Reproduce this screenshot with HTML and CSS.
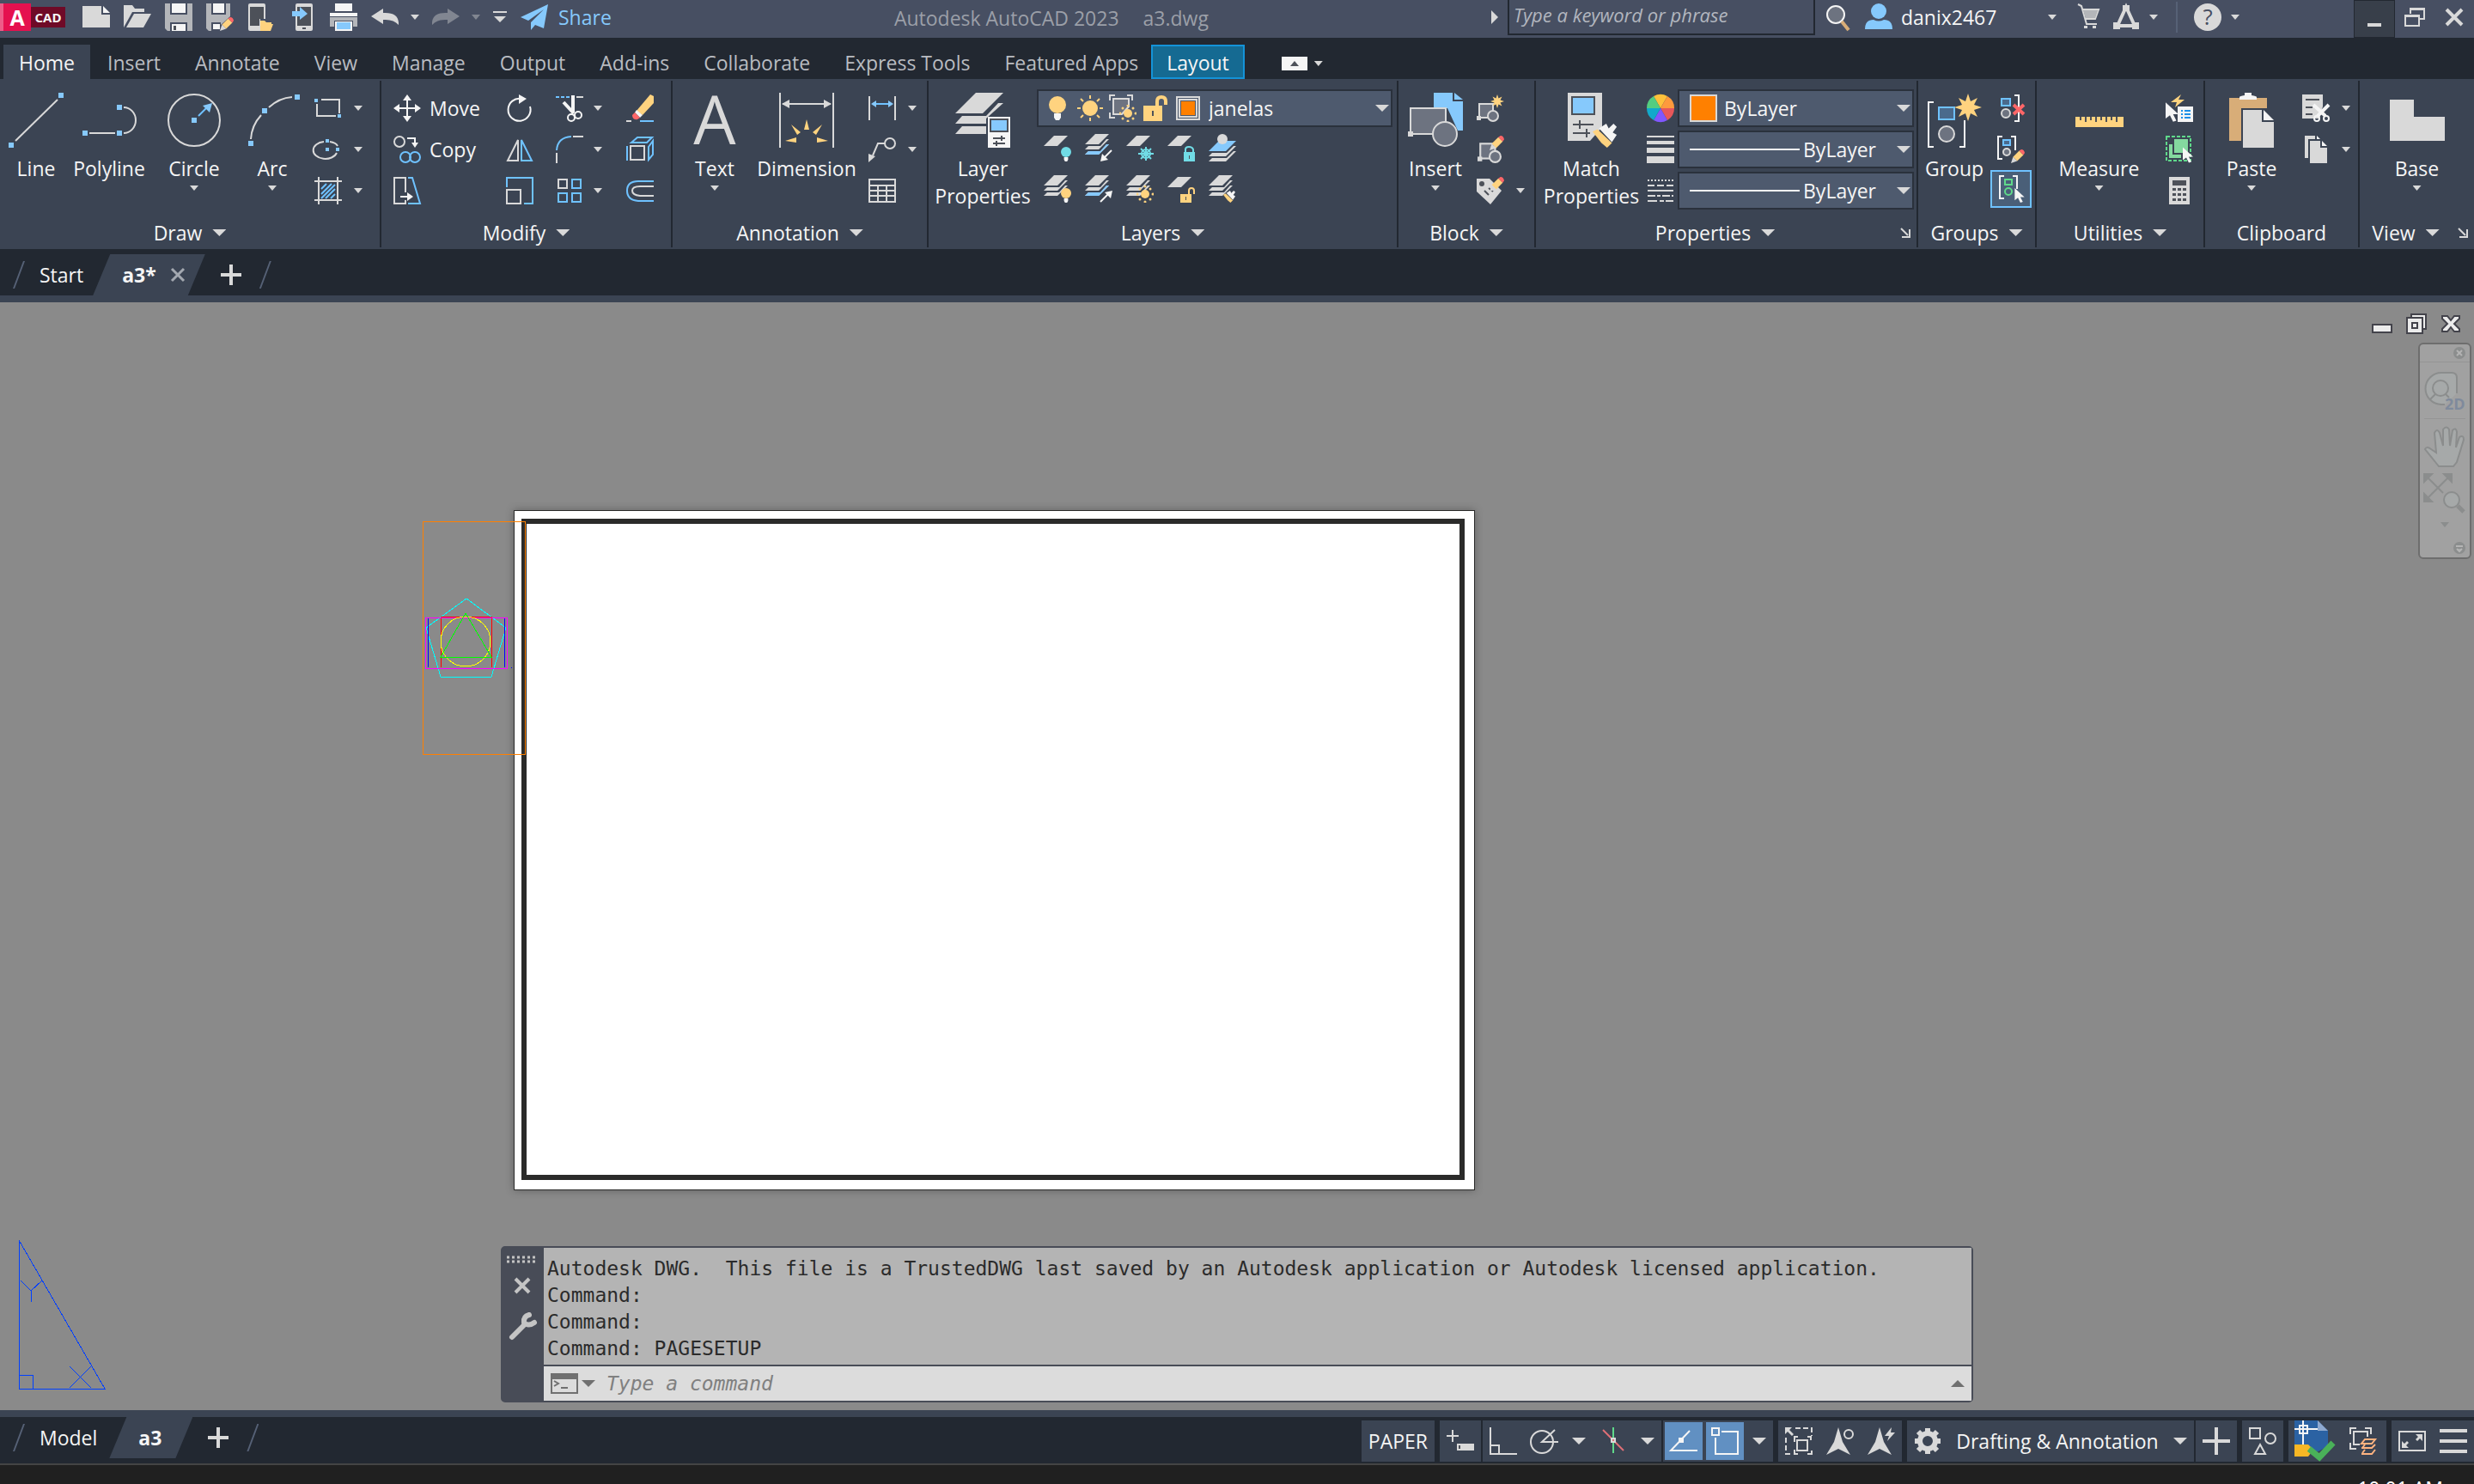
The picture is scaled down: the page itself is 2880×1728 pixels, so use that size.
FILE: index.html
```html
<!DOCTYPE html>
<html lang="en">

<head>
  <meta charset="utf-8">
  <title>Autodesk AutoCAD 2023 - a3.dwg</title>
  <link rel="stylesheet" href="styles.css">
</head>

<body>
  <!-- Shared icon parts -->
  <svg class="sprite" aria-hidden="true">
    <symbol id="plane" viewBox="0 0 28 12"><path class="fw" d="M0 12L12 0H28L16 12z"/></symbol>
    <symbol id="stack" viewBox="0 0 28 24">
      <path class="fw" d="M0 12L12 0H28L16 12zM0 18L4 14H18L25 6H28L16 18zM0 24L4 20H18L25 12H28L16 24z"/>
    </symbol>
    <symbol id="bulb" viewBox="0 0 20 28">
      <circle class="fc" cx="10" cy="10" r="10"/><path class="fl" d="M6 20h8v5l-2 3h-4l-2-3z"/>
    </symbol>
    <symbol id="sundots" viewBox="0 0 20 20">
      <circle class="fy" cx="10" cy="10" r="5"/>
      <path class="sy dots" d="M10 1v.1M10 19v.1M1 10v.1M19 10v.1M4 4v.1M16 4v.1M4 16v.1M16 16v.1"/>
    </symbol>
    <symbol id="pencil" viewBox="0 0 20 20">
      <path class="fy" d="M3 11L12 2L18 8L9 17z"/><path class="fw" d="M3 11L9 17L0 20z"/><path class="fr" d="M12 2L15 0Q19 0 20 5L18 8z"/>
    </symbol>
    <symbol id="cursor" viewBox="0 0 12 18"><path class="fl" d="M0 0L12 11L7 11L10 17L7 18L4 12L0 15z"/></symbol>
    <symbol id="star" viewBox="0 0 32 32">
      <path class="fy" d="M16 0L19 9L27 5L23 13L32 16L23 19L27 27L19 23L16 32L13 23L5 27L9 19L0 16L9 13L5 5L13 9z"/>
    </symbol>
    <symbol id="brush" viewBox="0 0 32 32">
      <path class="fl" d="M9 8L18 2L21 8L27 2L31 6L26 13L31 16L25 25z"/><path class="fy" d="M7 9L25 26L19 32L12 26L1 12z"/>
    </symbol>
    <symbol id="blk" viewBox="0 0 26 24">
      <rect class="sg" x="3" y="3" width="16" height="16"/><rect class="fw" x="0" y="17" width="5" height="5"/><circle class="sg" cx="19" cy="17" r="6"/>
    </symbol>
  </svg>

  <header class="titlebar">
    <div class="quick">
      <div class="logo"><b>A</b><span>CAD</span></div>
      <button title="New"><svg class="i32" viewBox="0 0 32 32"><path class="fw" d="M0 3H22V13H32V28H0z"/><path class="fl" d="M24 3L32 11H24z"/></svg></button>
      <button title="Open"><svg class="i32" viewBox="0 0 32 32"><path class="fw" d="M0 28V2H10L13 6H24V10H10L0 28zM3 28L12 12H32L23 28z"/></svg></button>
      <button title="Save"><svg class="i32" viewBox="0 0 32 32"><path class="fm" d="M0 0H6V13H26V0H32V32H26V22H6V32H3L0 29z"/><path class="fl" d="M8 0H24V11H8zM8 24H24V32H8z"/><path class="fk" d="M10 26h3v5h-3z"/></svg></button>
      <button title="Save As"><svg class="i32" viewBox="0 0 32 32"><path class="fm" d="M0 0H6V13H23V0H28V15L17 25V22H6V32H3L0 29z"/><path class="fl" d="M8 0H21V11H8zM8 24H16V30H8z"/><use href="#pencil" x="16" y="16" width="16" height="16"/></svg></button>
      <button title="Open from Web and Mobile"><svg class="i32" viewBox="0 0 32 32"><path class="fw" d="M1 2Q1 0 3 0H19Q21 0 21 2V18H15V32H3Q1 32 1 30z"/><path class="fk" d="M3 4H19V18H14V26H3z"/><path class="fy" d="M15 32V20H20L22 22H28V24H30L27 32z"/></svg></button>
      <button title="Save to Web and Mobile"><svg class="i32" viewBox="0 0 32 32"><path class="fw" d="M8 2Q8 0 10 0H26Q28 0 28 2V30Q28 32 26 32H10Q8 32 8 30z"/><path class="fk" d="M10 4H26V26H10zM16 28h4v2h-4z"/><path class="fb" d="M4 9H13V4L22 12L13 19V15H4z"/></svg></button>
      <button title="Plot"><svg class="i32" viewBox="0 0 32 32"><path class="fl" d="M6 0H26V9H6zM0 11H32V15H0z"/><path class="fm" d="M0 16H32V27H27V20H5V27H0z"/><path class="fl" d="M6 21H26V32H6z"/><path class="fb" d="M8 22H24V30H8z"/></svg></button>
      <button title="Undo"><svg class="i32" viewBox="0 0 32 32"><path class="fw" d="M0 15L14 6V11Q31 10 32 22V25Q26 18 14 19V24z"/></svg></button>
      <i class="caret"></i>
      <button title="Redo" class="dim"><svg class="i32" viewBox="0 0 32 32"><path class="fw" d="M32 15L18 6V11Q1 10 0 22V25Q6 18 18 19V24z"/></svg></button>
      <i class="caret dim"></i>
      <button title="Customize"><svg class="i16" viewBox="0 0 16 14"><path class="fw" d="M0 0H16V2H0zM1 6H15L8 13z"/></svg></button>
      <button class="share"><svg class="i32" viewBox="0 0 32 32"><path class="fb" d="M32 1L0 16L9 20L27 7L12 22V31L17 25L27 29z"/></svg>Share</button>
    </div>
    <div class="doc-title"><span>Autodesk AutoCAD 2023</span><span>a3.dwg</span></div>
    <div class="infocenter">
      <svg class="play" viewBox="0 0 8 16"><path class="fw" d="M0 0L8 8L0 16z"/></svg>
      <input type="text" aria-label="Search" placeholder="Type a keyword or phrase">
      <button title="Search"><svg class="i32" viewBox="0 0 32 32"><circle class="sg sl" cx="13" cy="13" r="10"/><path class="so" d="M20 21L28 31"/></svg></button>
      <button class="user"><svg class="i32" viewBox="0 0 32 32"><circle class="fb" cx="16" cy="9" r="9"/><path class="fb" d="M0 30Q0 19 10 19Q16 22 22 19Q32 19 32 30z"/></svg>danix2467</button>
      <i class="caret"></i>
      <button title="App Store" class="cart"><svg class="i32" viewBox="0 0 32 32"><path d="M3 1L7 3L13 24H25M9 7H27L23 18H12"/><path class="fm" d="M9 8H26L23 17H12z"/><path class="fw" d="M10 26h4v3h-4zM20 26h4v3h-4z"/></svg></button>
      <button title="Autodesk App"><svg class="i32" viewBox="0 0 32 32"><path class="thick" d="M16 4L26 26H6z"/><path class="fw" d="M12 2h8v6h-8zM1 22h8v8h-8zM23 22h8v8h-8z"/></svg></button>
      <i class="caret"></i>
      <i class="bar"></i>
      <button title="Help"><svg class="i32" viewBox="0 0 32 32"><circle class="fw" cx="16" cy="16" r="16"/><text class="help-mark" x="16" y="25">?</text></svg></button>
      <i class="caret"></i>
    </div>
    <div class="window-buttons">
      <button title="Minimize" class="min"><svg class="i24" viewBox="0 0 24 24"><path class="fw" d="M4 19h16v4h-16z"/></svg></button>
      <button title="Restore"><svg class="i24" viewBox="0 0 24 24"><path d="M7 8V2H23V14H18M1 10H17V22H1z"/><path class="fw" d="M6 1H24V4H6zM0 9H18V12H0z"/></svg></button>
      <button title="Close"><svg class="i24" viewBox="0 0 24 24"><path class="thick" d="M3 3L21 21M21 3L3 21"/></svg></button>
    </div>
  </header>

  <nav class="ribbon-tabs">
    <a href="#" class="active">Home</a>
    <a href="#">Insert</a>
    <a href="#">Annotate</a>
    <a href="#">View</a>
    <a href="#">Manage</a>
    <a href="#">Output</a>
    <a href="#">Add-ins</a>
    <a href="#">Collaborate</a>
    <a href="#">Express Tools</a>
    <a href="#">Featured Apps</a>
    <a href="#" class="context">Layout</a>
    <button title="Minimize ribbon" class="collapse"><svg viewBox="0 0 30 16"><path class="fl" d="M0 0H30V16H0z"/><path class="fk" d="M10 11H20L15 5z"/></svg><i class="caret"></i></button>
  </nav>

  <main class="ribbon">
    <!-- Draw -->
    <section class="panel draw">
      <div class="panel-body">
        <button class="big"><svg viewBox="0 0 64 64"><path d="M8 56L57 8"/><path class="fb" d="M0 58h6v6h-6zM58 0h6v6h-6z"/></svg>Line</button>
        <button class="big"><svg viewBox="0 0 64 64"><path d="M9 47H39M49 17a14 15 0 0 1 0 30"/><path class="fb" d="M1 44h6v6h-6zM41 44h6v6h-6zM41 14h6v6h-6z"/></svg>Polyline</button>
        <button class="big"><svg viewBox="0 0 64 64"><circle cx="32" cy="32" r="30"/><path class="sb" d="M37 27L47 17"/><path class="fb" d="M29 29h6v6h-6zM53 12L50 23L42 15z"/></svg>Circle<i class="caret"></i></button>
        <button class="big"><svg viewBox="0 0 64 64"><path d="M7 54Q8 38 19 26M28 17Q40 6 55 5"/><path class="fb" d="M4 56h6v6h-6zM20 18h6v6h-6zM58 2h6v6h-6z"/></svg>Arc<i class="caret"></i></button>
        <div class="tools">
          <button title="Rectangle"><svg class="i32" viewBox="0 0 32 32"><path d="M8 6H29V22M3 11V25H25"/><path class="fb" d="M0 5h4v4h-4zM27 23h4v4h-4z"/></svg><i class="caret"></i></button>
          <button title="Ellipse"><svg class="i32" viewBox="0 0 32 32"><path d="M11 7A14 10 0 1 0 26 20M18 7Q25 8 27 12"/><path class="fb" d="M13 4h4v4h-4zM13 14h4v4h-4zM25 14h4v4h-4z"/></svg><i class="caret"></i></button>
          <button title="Hatch"><svg class="i32" viewBox="0 0 32 32"><path d="M5 0V32M27 0V32M0 5H32M0 27H32"/><path class="sb" d="M8 14L14 8M8 20L20 8M8 25L24 9M13 25L24 14M19 25L24 20"/></svg><i class="caret"></i></button>
        </div>
      </div>
      <div class="panel-title"><button>Draw<i class="caret wide"></i></button></div>
    </section>

    <!-- Modify -->
    <section class="panel modify">
      <div class="panel-body">
        <div class="tools">
          <button><svg class="i32" viewBox="0 0 32 32"><path class="sl" d="M16 4V28M4 16H28"/><path class="fl" d="M16 0L21 7H11zM16 32L11 25H21zM0 16L7 11V21zM32 16L25 21V11z"/></svg>Move</button>
          <button><svg class="i32" viewBox="0 0 32 32"><circle cx="7" cy="7" r="6"/><path class="sl" d="M16 3H25V8"/><path class="fl" d="M21 8H29L25 14z"/><circle class="sb" cx="14" cy="25" r="6"/><circle class="sb" cx="25" cy="25" r="6"/></svg>Copy</button>
          <button title="Stretch"><svg class="i32" viewBox="0 0 32 32"><path d="M14 18V1H1V31H14V27"/><path class="sb" d="M17 1H22L31 31H17"/><path class="sl" d="M8 23H18"/><path class="fl" d="M16 18L23 23L16 28z"/></svg></button>
        </div>
        <div class="tools">
          <button title="Rotate"><svg class="i32" viewBox="0 0 32 32"><path class="sl" d="M18 5A13 13 0 1 0 28 14"/><path class="fl" d="M15 0L24 5L15 11z"/></svg></button>
          <button title="Mirror"><svg class="i32" viewBox="0 0 32 32"><path d="M14 5V29H2z"/><path class="sb" d="M18 5V29H30z"/></svg></button>
          <button title="Scale"><svg class="i32" viewBox="0 0 32 32"><path class="sb" d="M1 12V1H31V31H21"/><path d="M1 15H17V31H1z"/></svg></button>
        </div>
        <div class="tools">
          <button title="Trim"><svg class="i32" viewBox="0 0 32 32"><path class="sb" d="M0 3H4M6 3H10M12 3H16"/><path d="M24 3H32"/><path class="sl thick" d="M9 9L21 22M20 1V20"/><circle class="sl" cx="18" cy="27" r="4"/><circle class="sl" cx="26" cy="24" r="4"/></svg><i class="caret"></i></button>
          <button title="Fillet"><svg class="i32" viewBox="0 0 32 32"><path class="sb" d="M1 17Q2 2 18 1"/><path d="M20 1H32M1 20V32"/></svg><i class="caret"></i></button>
          <button title="Array"><svg class="i32" viewBox="0 0 32 32"><path d="M3 3H13V13H3z"/><path class="sb" d="M19 3H29V13H19zM3 19H13V29H3zM19 19H29V29H19z"/></svg><i class="caret"></i></button>
        </div>
        <div class="tools">
          <button title="Erase"><svg class="i32" viewBox="0 0 32 32"><path class="fy" d="M12 19L28 0L32 2V10L19 24z"/><path class="fl" d="M10 21L12 18L19 24L16 27z"/><path class="fr" d="M7 24L10 21L16 27L13 29Q7 30 7 24z"/><path d="M0 31H6"/><path class="sb" d="M16 31H32"/></svg></button>
          <button title="Explode"><svg class="i32" viewBox="0 0 32 32"><path class="sb" d="M1 12V29M6 8L13 2H30L24 8zM26 13L31 6V22L26 28z"/><path d="M5 12H21V28H5z"/></svg></button>
          <button title="Offset"><svg class="i32" viewBox="0 0 32 32"><path class="sb" d="M32 5H14Q1 5 1 16T14 28H32"/><path d="M32 11H16Q7 11 7 16T16 22H32"/></svg></button>
        </div>
      </div>
      <div class="panel-title"><button>Modify<i class="caret wide"></i></button></div>
    </section>

    <!-- Annotation -->
    <section class="panel annotation">
      <div class="panel-body">
        <button class="big"><svg viewBox="0 0 64 64"><text class="letter" x="32" y="60">A</text></svg>Text<i class="caret"></i></button>
        <button class="big"><svg viewBox="0 0 64 64"><path d="M1 0V64M63 0V64M4 13H60"/><path class="fw" d="M3 13L12 8V18zM61 13L52 18V8z"/><path class="fy" d="M32 31L35 43H29zM14 37L25 46L21 49zM50 37L39 46L43 49zM7 56L20 52V58zM57 56L44 52V58z"/></svg>Dimension</button>
        <div class="tools">
          <button title="Linear"><svg class="i32" viewBox="0 0 32 32"><path d="M1 2V30M31 2V30"/><path class="sb" d="M7 11H25"/><path class="fb" d="M3 11L9 7V15zM29 11L23 15V7z"/></svg><i class="caret"></i></button>
          <button title="Leader"><svg class="i32" viewBox="0 0 32 32"><circle cx="25" cy="9" r="6"/><path d="M19 9H11L5 23"/><path class="fw" d="M0 31V21L8 24z"/></svg><i class="caret"></i></button>
          <button title="Table"><svg class="i32" viewBox="0 0 32 32"><path d="M1 3H31V29H1zM1 10H31M1 16H31M1 22H31M11 10V29M21 10V29"/></svg></button>
        </div>
      </div>
      <div class="panel-title"><button>Annotation<i class="caret wide"></i></button></div>
    </section>

    <!-- Layers -->
    <section class="panel layers">
      <div class="panel-body">
        <button class="big"><svg viewBox="0 0 64 64"><path class="fw" d="M0 24L24 0H56L32 24zM0 36L8 27H36L50 12H56L36 30V36zM0 48L8 39H36V48z"/><path class="fl" d="M38 28H64V64H38z"/><path class="fk" d="M40 30H62V46H40z"/><path class="fb" d="M42 32H60V44H42z"/><path class="sk" d="M44 53H58M44 59H58M54 50V56M48 56V62"/></svg>Layer<br>Properties</button>
        <div class="layer-tools">
          <div class="combo">
            <svg class="i32" viewBox="0 0 32 32"><use href="#bulb" class="yellow" x="6" y="2" width="20" height="28"/></svg>
            <svg class="i32" viewBox="0 0 32 32"><circle class="fy" cx="16" cy="16" r="9"/><path class="sy" d="M16 1V5M16 27V31M1 16H5M27 16H31M5 5L8 8M27 5L24 8M5 27L8 24M27 27L24 24"/></svg>
            <svg class="i32" viewBox="0 0 32 32"><path d="M1 7V1H7M21 1H27V7M1 21V27H7"/><path class="sg" d="M5 5H23V14L15 23H5z"/><use href="#sundots" x="12" y="12" width="20" height="20"/></svg>
            <svg class="i32" viewBox="0 0 32 32"><path class="fy" d="M2 13H24V31H2z"/><path class="sy thick" d="M18 13V8Q18 3 23 3T28 8V12"/><path class="fk" d="M12 19h2v6h-2z"/></svg>
            <svg class="i32" viewBox="0 0 32 32"><path d="M3 3H29V29H3zM6 6H26V26H6z"/><path class="fo" d="M8 8H24V24H8z"/></svg>
            <select aria-label="Layer"><option>janelas</option></select>
            <i class="caret wide"></i>
          </div>
          <div class="row">
            <button title="Off"><svg class="i32" viewBox="0 0 32 32"><use href="#plane" y="2" width="28" height="12"/><use href="#bulb" class="cyan" x="20" y="15" width="12" height="17"/></svg></button>
            <button title="Isolate"><svg class="i32" viewBox="0 0 32 32"><use href="#stack" width="28" height="24"/><path class="fb" d="M0 24L4 20H18L25 12H28L16 24z"/><path class="sl" d="M31 19L22 28"/><path class="fl" d="M18 32L20 23L27 30z"/></svg></button>
            <button title="Freeze"><svg class="i32" viewBox="0 0 32 32"><use href="#plane" y="2" width="28" height="12"/><path class="sc" d="M23 15V31M14 23H32M17 17L29 29M29 17L17 29"/><circle class="sc" cx="23" cy="23" r="5"/></svg></button>
            <button title="Lock"><svg class="i32" viewBox="0 0 32 32"><use href="#plane" y="2" width="28" height="12"/><path class="fc cyan" d="M19 21H32V32H19z"/><path class="sc" d="M21 21V18Q21 15 25 15T30 18V21"/><path class="fk" d="M25 25h1v4h-1z"/></svg></button>
            <button title="Make Current"><svg class="i32" viewBox="0 0 32 32"><path class="fb" d="M0 20L12 8H32L20 20z"/><path class="fw" d="M0 26L4 22H21L29 14H32L20 26zM0 32L4 28H21L29 20H32L20 32z"/><circle class="fw" cx="16" cy="6" r="6"/></svg></button>
          </div>
          <div class="row">
            <button title="Turn All On"><svg class="i32" viewBox="0 0 32 32"><use href="#stack" width="28" height="24"/><use href="#bulb" class="yellow" x="20" y="15" width="12" height="17"/></svg></button>
            <button title="Unisolate"><svg class="i32" viewBox="0 0 32 32"><use href="#stack" width="28" height="24"/><path class="fb" d="M0 24L4 20H18L25 12H28L16 24z"/><path class="sl" d="M18 31L27 22"/><path class="fl" d="M32 18L30 27L23 20z"/></svg></button>
            <button title="Thaw All"><svg class="i32" viewBox="0 0 32 32"><use href="#stack" width="28" height="24"/><use href="#sundots" x="12" y="12" width="20" height="20"/></svg></button>
            <button title="Unlock"><svg class="i32" viewBox="0 0 32 32"><use href="#plane" y="2" width="28" height="12"/><path class="fy" d="M15 22H28V32H15z"/><path class="sy" d="M25 22V18Q25 15 28 15T31 18V22"/><path class="fk" d="M21 25h1v4h-1z"/></svg></button>
            <button title="Match Layer"><svg class="i32" viewBox="0 0 32 32"><use href="#stack" width="28" height="24"/><use href="#brush" x="16" y="17" width="16" height="15"/></svg></button>
          </div>
        </div>
      </div>
      <div class="panel-title"><button>Layers<i class="caret wide"></i></button></div>
    </section>

    <!-- Block -->
    <section class="panel block">
      <div class="panel-body">
        <button class="big"><svg viewBox="0 0 64 64"><path class="fb" d="M30 0H52V10H64V44H58L46 18H30z"/><path class="fb" d="M54 0L64 8H54z"/><rect class="sg" x="3" y="18" width="41" height="30"/><circle class="sg" cx="43" cy="48" r="14"/><path class="fw" d="M0 45h6v6h-6z"/></svg>Insert<i class="caret"></i></button>
        <div class="tools">
          <button title="Create Block"><svg class="i32" viewBox="0 0 32 32"><use href="#blk" y="8" width="26" height="24"/><use href="#star" x="16" width="16" height="16"/></svg></button>
          <button title="Edit Block"><svg class="i32" viewBox="0 0 32 32"><use href="#blk" x="1" y="6" width="28" height="26"/><use href="#pencil" x="15" width="17" height="17"/></svg></button>
          <button title="Edit Attributes"><svg class="i32" viewBox="0 0 32 32"><path class="fw" d="M0 2H15L29 16L16 32L0 17z"/><circle class="fk" cx="6" cy="8" r="3"/><path class="sk" d="M9 16L14 21M14 13L19 17"/><use href="#pencil" x="15" width="17" height="17"/></svg><i class="caret"></i></button>
        </div>
      </div>
      <div class="panel-title"><button>Block<i class="caret wide"></i></button></div>
    </section>

    <!-- Properties -->
    <section class="panel properties">
      <div class="panel-body">
        <button class="big"><svg viewBox="0 0 64 64"><path class="fw" d="M4 0H44V40L30 56H4z"/><path class="fk" d="M8 4H36V26H8z"/><path class="fb" d="M10 6H34V24H10z"/><path class="sk" d="M10 37H34M10 47H30M18 32V42M26 42V52"/><use href="#brush" x="30" y="34" width="34" height="30"/></svg>Match<br>Properties</button>
        <div class="prop-rows">
          <div class="prop">
            <svg class="i32" viewBox="0 0 32 32"><path fill="#ffc13b" stroke="none" d="M16 16L8 2A16 16 0 0 1 24 2z"/><path fill="#ff9a3d" stroke="none" d="M16 16L24 2A16 16 0 0 1 32 16z"/><path fill="#e8575a" stroke="none" d="M16 16H32A16 16 0 0 1 24 30z"/><path fill="#8157ff" stroke="none" d="M16 16L24 30A16 16 0 0 1 8 30z"/><path fill="#12a9cb" stroke="none" d="M16 16L8 30A16 16 0 0 1 0 16z"/><path fill="#54cd80" stroke="none" d="M16 16H0A16 16 0 0 1 8 2z"/></svg>
            <div class="combo"><span class="swatch"></span><select aria-label="Object color"><option>ByLayer</option></select><i class="caret wide"></i></div>
          </div>
          <div class="prop">
            <svg class="i32" viewBox="0 0 32 32"><path class="fw" d="M0 0H32V2H0zM0 6H32V10H0zM0 14H32V20H0zM0 24H32V32H0z"/></svg>
            <div class="combo"><span class="sample"></span><select aria-label="Lineweight"><option>ByLayer</option></select><i class="caret wide"></i></div>
          </div>
          <div class="prop">
            <svg class="i32" viewBox="0 0 32 32"><path stroke-dasharray="2 2" d="M1 4H31"/><path stroke-dasharray="8 3" d="M1 10H31"/><path d="M1 16H31"/><path stroke-dasharray="9 2 4 2" d="M1 22H31"/><path stroke-dasharray="11 3 5 2" d="M1 28H31"/></svg>
            <div class="combo"><span class="sample"></span><select aria-label="Linetype"><option>ByLayer</option></select><i class="caret wide"></i></div>
          </div>
        </div>
      </div>
      <div class="panel-title"><button>Properties<i class="caret wide"></i></button><button title="Properties palette" class="launcher"><svg viewBox="0 0 12 12"><path d="M1 1L9 9M11 2V11H2"/></svg></button></div>
    </section>

    <!-- Groups -->
    <section class="panel groups">
      <div class="panel-body">
        <button class="big"><svg viewBox="0 0 64 64"><path class="sl" d="M8 11H2V63H8M38 63H44V32"/><path class="sb tint" d="M14 17H32V31H14z"/><circle class="sg" cx="23" cy="48" r="9"/><use href="#star" x="32" y="1" width="32" height="32"/></svg>Group</button>
        <div class="tools">
          <button title="Ungroup"><svg class="i32" viewBox="0 0 32 32"><path class="sl" d="M20 1H25V31H20"/><path class="sb tint" d="M5 5H15V13H5z"/><circle class="sg" cx="10" cy="22" r="5"/><path class="sr" d="M19 12L31 23M31 12L19 23"/></svg></button>
          <button title="Group Edit"><svg class="i32" viewBox="0 0 32 32"><path class="sl" d="M6 1H1V27H6M16 1H21V17"/><path class="sb tint" d="M7 5H15V11H7z"/><circle class="sg" cx="11" cy="19" r="4"/><use href="#pencil" x="16" y="16" width="16" height="16"/></svg></button>
          <button title="Group Selection" class="pressed"><svg class="i32" viewBox="0 0 32 32"><path class="sl" d="M8 1H3V27H8M18 1H23V16"/><path class="se" d="M9 5H17V11H9z"/><circle class="se" cx="13" cy="19" r="4"/><use href="#cursor" x="20" y="15" width="12" height="17"/></svg></button>
        </div>
      </div>
      <div class="panel-title"><button>Groups<i class="caret wide"></i></button></div>
    </section>

    <!-- Utilities -->
    <section class="panel utilities">
      <div class="panel-body">
        <button class="big"><svg viewBox="0 0 64 64"><path class="fy" d="M4 28H60V40H4z"/><path class="sk" d="M10 28V32M16 28V34M22 28V32M28 28V34M34 28V32M40 28V34M46 28V32M52 28V34"/></svg>Measure<i class="caret"></i></button>
        <div class="tools">
          <button title="Quick Select"><svg class="i32" viewBox="0 0 32 32"><use href="#cursor" y="9" width="15" height="23"/><path class="fy" d="M18 0L6 9H13L11 15L22 6H15z"/><path class="fl" d="M14 14H32V32H14z"/><path class="sv" d="M18 19H20M22 19H29M18 23H20M22 23H29M18 27H20M22 27H29"/></svg></button>
          <button title="Select All"><svg class="i32" viewBox="0 0 32 32"><path class="se" stroke-dasharray="4 2" d="M1 1H29V29H1z"/><path class="fg" d="M10 4H26V20H10zM4 10H8V22H18V26H4z"/><use href="#cursor" x="20" y="13" width="12" height="19"/></svg></button>
          <button title="Quick Calculator"><svg class="i32" viewBox="0 0 32 32"><path class="fw" d="M4 0H28V32H4z"/><path class="fk" d="M8 4h16v6H8zM8 13h4v3H8zM14 13h4v3h-4zM20 13h4v3h-4zM8 19h4v3H8zM14 19h4v3h-4zM20 19h4v3h-4zM8 25h4v3H8zM14 25h4v3h-4zM20 25h4v3h-4z"/></svg></button>
        </div>
      </div>
      <div class="panel-title"><button>Utilities<i class="caret wide"></i></button></div>
    </section>

    <!-- Clipboard -->
    <section class="panel clipboard">
      <div class="panel-body">
        <button class="big"><svg viewBox="0 0 64 64"><path class="ft" d="M6 6H50V18H20V56H6z"/><path class="fl" d="M18 8V5Q18 4 24 3V0H32V3Q38 4 38 5V8z"/><path class="fw" d="M22 20H44V34H58V64H22z"/><path class="fl" d="M46 20L58 32H46z"/></svg>Paste<i class="caret"></i></button>
        <div class="tools">
          <button title="Cut"><svg class="i32" viewBox="0 0 32 32"><path class="fw" d="M0 0H24V14L20 28H0z"/><path class="sk" d="M4 6H20M4 15H12M4 23H12"/><path class="sl thick" d="M13 12L27 25M31 12L18 25"/><circle class="sl" cx="17" cy="28" r="3"/><circle class="sl" cx="28" cy="28" r="3"/></svg><i class="caret"></i></button>
          <button title="Copy Clip"><svg class="i32" viewBox="0 0 32 32"><path class="fw" d="M3 0H15V4H7V26H3zM9 6H21V14H29V32H9z"/><path class="fl" d="M17 0L21 4H17zM23 6L29 12H23z"/></svg><i class="caret"></i></button>
        </div>
      </div>
      <div class="panel-title"><button>Clipboard</button></div>
    </section>

    <!-- View -->
    <section class="panel view">
      <div class="panel-body">
        <button class="big"><svg viewBox="0 0 64 64"><path class="fw" d="M0 8H28V28H64V56H0z"/></svg>Base<i class="caret"></i></button>
      </div>
      <div class="panel-title"><button>View<i class="caret wide"></i></button><button title="View options" class="launcher"><svg viewBox="0 0 12 12"><path d="M1 1L9 9M11 2V11H2"/></svg></button></div>
    </section>
  </main>

  <nav class="file-tabs">
    <i class="slash"></i>
    <a href="#">Start</a>
    <a href="#" class="current">a3*<svg viewBox="0 0 18 18"><path d="M2 2L16 16M16 2L2 16"/></svg></a>
    <button title="New drawing" class="plus"><svg viewBox="0 0 24 24"><path d="M12 0V24M0 12H24"/></svg></button>
    <i class="slash"></i>
  </nav>

  <section class="canvas">
    <!-- Paper sheet and the drawn objects -->
    <svg class="drawing" viewBox="480 582 1250 820">
      <rect class="sheet" x="598" y="594" width="1118" height="791"/>
      <rect class="viewport" x="610" y="607" width="1092" height="764"/>
      <g class="thin">
        <rect stroke="#ff8000" x="492" y="607" width="119" height="271"/>
        <path stroke="#00ffff" d="M543 697L589 731L572 788H513L496 731z"/>
        <path stroke="#ff0000" d="M513 777V718H572V777"/>
        <path stroke="#0000ff" d="M498 719V777M587 719V777M595 777H596"/>
        <rect stroke="#ff00ff" x="495" y="719" width="95" height="59"/>
        <circle stroke="#ffff00" cx="542" cy="747" r="29"/>
        <path stroke="#00ff00" d="M542 714L513 765H572z"/>
      </g>
    </svg>

    <svg class="ucs" viewBox="0 0 102 175">
      <path d="M1 1V174H101zM1 158H17V174M3 48L15 60L28 48M15 60V73M60 148L85 173M85 148L60 173"/>
    </svg>

    <div class="mdi-buttons">
      <button title="Minimize"><svg class="i24" viewBox="0 0 24 24"><path d="M1 13H23V22H1z"/></svg></button>
      <button title="Restore"><svg class="i24" viewBox="0 0 24 24"><path d="M6 1H23V18H6z"/><path d="M1 5H19V23H1zM7 11H13V17H7z"/></svg></button>
      <button title="Close"><svg class="i24" viewBox="0 0 24 24"><path d="M2 3H8L12 8L16 3H22V6L16 12L22 18V21H16L12 16L8 21H2V18L8 12L2 6z"/></svg></button>
    </div>

    <div class="navbar">
      <button title="Close" class="nav-dot"><svg viewBox="0 0 16 16"><circle cx="8" cy="8" r="7"/><path d="M5 5L11 11M11 5L5 11"/></svg></button>
      <button title="Steering wheel" class="wheel"><svg viewBox="0 0 48 48"><path d="M38 28V10Q38 4 32 4H20A18 18 0 0 0 20 41H24M7 35L13 29M25 29L29 33"/><circle cx="19" cy="22" r="9"/><text x="24" y="47">2D</text></svg></button>
      <button title="Pan"><svg viewBox="0 0 48 48"><path d="M17 47L1 27Q3 23 8 27L14 31L12 8Q15 2 18 8L22 23V4Q26-1 29 4L30 23L33 5Q37 1 38 7L37 25L41 13Q46 10 46 16L38 42L34 47z"/></svg></button>
      <button title="Zoom extents"><svg viewBox="0 0 48 48"><path d="M3 3L22 22M29 3L3 29"/><path class="nf" d="M0 0H9L0 9zM32 0V9L23 0zM0 32V23L9 32z"/><circle cx="32" cy="30" r="9"/><path class="handle" d="M39 37L46 44"/></svg></button>
      <i class="caret"></i>
      <button title="Options" class="nav-dot last"><svg viewBox="0 0 16 16"><circle cx="8" cy="8" r="7"/><path d="M4 6H12M5 9L8 12L11 9"/></svg></button>
    </div>

    <!-- Floating command window -->
    <div class="command">
      <div class="grip">
        <svg class="dots-grip" viewBox="0 0 36 9"><path d="M0 2H36M0 7H36"/></svg>
        <button title="Close"><svg viewBox="0 0 20 20"><path d="M2 2L18 18M18 2L2 18"/></svg></button>
        <button title="Customize"><svg class="wrench" viewBox="0 0 32 32"><path d="M4 28L19 13"/><path class="jaw" d="M24 2Q17 4 18 11Q23 16 30 11"/></svg></button>
      </div>
      <div class="console">
        <pre>Autodesk DWG.  This file is a TrustedDWG last saved by an Autodesk application or Autodesk licensed application.
Command:
Command:
Command: PAGESETUP</pre>
        <div class="prompt">
          <svg class="term" viewBox="0 0 32 24"><path d="M1 1H31V23H1zM4 9L9 12L4 15M12 17H20"/><path class="head" d="M1 1H31V6H1z"/></svg>
          <i class="caret wide"></i>
          <input type="text" aria-label="Command line" placeholder="Type a command">
          <i class="caret up"></i>
        </div>
      </div>
    </div>
  </section>

  <footer class="statusbar">
    <nav class="layout-tabs">
      <i class="slash"></i>
      <a href="#">Model</a>
      <a href="#" class="current">a3</a>
      <button title="New layout" class="plus"><svg viewBox="0 0 24 24"><path d="M12 0V24M0 12H24"/></svg></button>
      <i class="slash"></i>
    </nav>
    <div class="status">
      <div class="cell"><button class="paper">PAPER</button></div>
      <div class="cell"><button title="Dynamic input"><svg class="i32" viewBox="0 0 32 32"><path d="M7 3V17M0 10H14"/><path class="fw" d="M12 19H32V27H12z"/><path class="fk" d="M14 21h2v4h-2z"/></svg></button></div>
      <div class="cell join snap">
        <button title="Ortho"><svg class="i32" viewBox="0 0 32 32"><path d="M1 0V31H32M1 21H11V31"/></svg></button>
        <button title="Polar"><svg class="i32" viewBox="0 0 32 32"><circle cx="13" cy="17" r="13"/><path d="M28 3L13 17H32"/></svg></button>
        <i class="caret wide"></i>
        <button title="Isodraft"><svg class="i32" viewBox="0 0 32 32"><path class="se" d="M16 0V30"/><path class="sd" d="M4 3L28 27"/><path d="M14 13h4v4h-4z"/></svg></button>
        <i class="caret wide"></i>
      </div>
      <div class="cell join osnap">
        <button title="Object snap tracking" class="on"><svg class="i32" viewBox="0 0 32 32"><path class="sl" d="M23 4L1 27H32"/><path class="fl" d="M10 12h6v6h-6z"/></svg></button>
        <button title="Object snap" class="on"><svg class="i32" viewBox="0 0 32 32"><path class="sl" d="M1 1H9V9H1zM12 5H31V31H5V12"/></svg></button>
        <i class="caret wide"></i>
      </div>
      <div class="cell trio">
        <button title="Selection cycling"><svg class="i32" viewBox="0 0 32 32"><path stroke-dasharray="6 3" d="M12 1H31V10M1 12V31H8"/><path d="M14 15H26V27H14zM11 17V11H15M26 11H30V15M11 26V31H15M31 27V31H26"/><path class="fw" d="M0 0H8L5 3L10 8L8 10L3 5L0 8z"/></svg></button>
        <button title="Annotation visibility"><svg class="i32" viewBox="0 0 32 32"><path class="fw" d="M14 0L19 17L28 32L14 25L0 32L9 17z"/><circle cx="26" cy="8" r="5"/></svg></button>
        <button title="Auto scale"><svg class="i32" viewBox="0 0 32 32"><path class="fw" d="M14 0L19 17L28 32L14 25L0 32L9 17zM28 0L20 10H25L23 16L32 6H27z"/></svg></button>
      </div>
      <div class="cell workspace">
        <button title="Workspace"><svg class="i32" viewBox="0 0 32 32"><circle class="gear" cx="16" cy="16" r="9"/><path class="cog" d="M16 1V8M16 24V31M1 16H8M24 16H31M5 5L10 10M22 22L27 27M27 5L22 10M10 22L5 27"/></svg></button>
        <button>Drafting &amp; Annotation</button>
        <i class="caret wide"></i>
      </div>
      <div class="cell join"><button title="Annotation monitor"><svg class="i32" viewBox="0 0 32 32"><path class="bold" d="M16 0V32M0 16H32"/></svg></button></div>
      <div class="cell"><button title="Isolate objects"><svg class="i32" viewBox="0 0 32 32"><path d="M1 1H13V13H1zM13 20L19 31H7z"/><circle cx="25" cy="13" r="6"/></svg></button></div>
      <div class="cell duo trusted">
        <button title="Trusted DWG"><svg class="i48" viewBox="0 0 48 48"><path fill="#2b62a3" stroke="none" d="M0 0H27L39 12V30L28 36H0z"/><path fill="#8fa9cf" stroke="none" d="M27 0L39 12H27z"/><path class="sl" d="M10 0V28M0 10H27M6 6H15V15H6z"/><path fill="#f7b725" stroke="none" d="M0 28H16L22 34L16 42H0z"/><path fill="none" stroke="#4ab159" stroke-width="7" d="M17 33L29 43L45 26"/></svg></button>
        <button title="Filter"><svg class="i32" viewBox="0 0 32 32"><path d="M1 8V1H8M18 1H25V8M1 18V25H8M12 20H5V5H21V11"/><path class="sp" d="M18 14H30L26 19H14zM14 24H26L30 20M14 31H26L30 26M15 24L18 20M15 30L18 26"/></svg></button>
      </div>
      <div class="cell duo">
        <button title="Clean screen"><svg class="i32" viewBox="0 0 32 32"><path d="M1 5H31V27H1z"/><path class="fw" d="M20 8H28V16L25 13L22 16L20 14L23 11zM4 24V16L7 19L10 16L12 18L9 21L12 24z"/></svg></button>
        <button title="Customization"><svg class="i32" viewBox="0 0 32 32"><path class="bold" d="M0 4H32M0 16H32M0 28H32"/></svg></button>
      </div>
    </div>
  </footer>

  <div class="taskbar"><span>10:01 AM</span></div>
</body>

</html>
```
FILE: styles.css
```css
/* Common styles */
* {
  margin: 0;
  padding: 0;
  box-sizing: border-box;
}

body {
  display: flex;
  flex-direction: column;
  height: 100vh;
  overflow: hidden;
  font-family: "Open Sans", "Noto Sans", sans-serif;
  font-size: 23px;
  line-height: 32px;
  color: #f5f5f5;
  background-color: #222831;
}

button,
input,
select {
  font: inherit;
  color: inherit;
  background: none;
  border: none;
  outline: none;
}

button {
  display: flex;
  align-items: center;
  white-space: nowrap;
}

a {
  color: inherit;
  text-decoration: none;
}

/* Icons */
svg {
  display: block;
  flex: none;
  overflow: visible;
  fill: none;
  stroke: #d9d9d9;
  stroke-width: 2;
}

.sprite {
  position: absolute;
  width: 0;
  height: 0;
}

.i16 { width: 16px; height: 14px; }
.i24 { width: 24px; height: 24px; }
.i32 { width: 32px; height: 32px; }
.i48 { width: 48px; height: 48px; }

.fw { fill: #d9d9d9; stroke: none; }
.fl { fill: #f5f5f5; stroke: none; }
.fm { fill: #b4b6ba; stroke: none; }
.fk { fill: #4d5159; stroke: none; }
.fb { fill: #86c9fc; stroke: none; }
.fy { fill: #ffd37f; stroke: none; }
.fr { fill: #ff6668; stroke: none; }
.fo { fill: #ff8000; stroke: none; }
.fg { fill: #84d99f; stroke: none; }
.ft { fill: #d8ad78; stroke: none; }
.fc { fill: currentColor; stroke: none; }
.sb { stroke: #6fc2ff; }
.sl { stroke: #f5f5f5; }
.sk { stroke: #4d5159; }
.sy { stroke: #ffd37f; }
.sr { stroke: #ff6668; stroke-width: 4; }
.sc { stroke: #71dce6; }
.se { stroke: #5fd98a; }
.sd { stroke: #e07076; }
.sv { stroke: #1a8fe8; }
.sp { stroke: #ffb380; }
.so { stroke: #d8ad78; stroke-width: 4; }
.sg { fill: #6d7380; }
.tint { fill: #4a6a8c; }
.thick { stroke-width: 4; }
.bold { stroke-width: 4; }
.dots { stroke-width: 3; stroke-linecap: round; }
.yellow { color: #ffd37f; }
.cyan { color: #71dce6; }

.letter {
  font-size: 78px;
  text-anchor: middle;
  fill: #d9d9d9;
  stroke: none;
}

.caret {
  flex: none;
  width: 10px;
  height: 6px;
  background-color: #d9d9d9;
  clip-path: polygon(0 0, 100% 0, 50% 100%);
}

.caret.wide {
  width: 16px;
  height: 8px;
}

.caret.up {
  width: 16px;
  height: 8px;
  background-color: #707070;
  clip-path: polygon(50% 0, 100% 100%, 0 100%);
}

.dim {
  opacity: 0.4;
}

/* Title bar */
.titlebar {
  display: flex;
  height: 44px;
  background-color: #474f62;
}

.quick,
.infocenter,
.window-buttons {
  display: flex;
  align-items: center;
  height: 40px;
}

.quick {
  gap: 16px;
}

.quick .caret {
  margin: 0 -1px 0 -2px;
}

.logo {
  display: flex;
  align-items: center;
  width: 80px;
}

.logo b {
  width: 36px;
  height: 32px;
  font-size: 25px;
  text-align: center;
  color: #fff;
  background-color: #e5114f;
  border-left: 4px solid #ee5c88;
}

.logo span {
  width: 40px;
  font-size: 15px;
  font-weight: bold;
  line-height: 24px;
  text-align: center;
  background-color: #6f0a27;
}

.share {
  gap: 12px;
  color: #86c9fc;
}

.doc-title {
  flex: 1;
  display: flex;
  justify-content: center;
  gap: 28px;
  line-height: 42px;
  white-space: nowrap;
  color: #9b9fa8;
}

.infocenter {
  gap: 11px;
}

.infocenter input {
  width: 358px;
  height: 42px;
  padding: 0 5px 4px;
  border: 2px solid #222831;
  border-top: none;
}

.infocenter input::placeholder {
  font-size: 22px;
  font-style: italic;
  color: #b2b6bf;
}

.play {
  width: 8px;
  height: 16px;
}

.user {
  gap: 10px;
  width: 202px;
  margin-left: 4px;
}

.cart {
  margin-left: 11px;
}

.bar {
  width: 2px;
  height: 36px;
  margin: 0 8px 0 10px;
  background-color: #566176;
}

.help-mark {
  font-size: 26px;
  text-anchor: middle;
  fill: #474f62;
  stroke: none;
}

.window-buttons {
  height: 44px;
  margin-left: 133px;
}

.window-buttons button {
  justify-content: center;
  width: 46px;
  height: 44px;
  padding-bottom: 4px;
}

.window-buttons .min {
  width: 48px;
  background-color: #383f4a;
  border: 1px solid #222831;
}

/* Ribbon tabs */
.ribbon-tabs {
  display: flex;
  align-items: flex-end;
  height: 48px;
  padding-left: 4px;
}

.ribbon-tabs a {
  height: 40px;
  padding: 0 20px;
  line-height: 43px;
  color: #b9bcc1;
}

.ribbon-tabs .active {
  padding: 0 18px;
  color: #f5f5f5;
  background-color: #3b4453;
}

.ribbon-tabs .context {
  margin-left: -5px;
  padding: 0 16px;
  line-height: 39px;
  color: #f5f5f5;
  background-color: #156a92;
  border: 2px solid #1493d8;
}

.collapse {
  gap: 8px;
  height: 36px;
  margin-left: 43px;
}

.collapse svg {
  width: 30px;
  height: 16px;
}

/* Ribbon */
.ribbon {
  display: grid;
  grid-template-columns: 444px 339px 298px 547px 160px 445px 138px 196px 180px 1fr;
  height: 198px;
  background-color: #3b4453;
}

.panel {
  margin: 2px 0;
  border-right: 2px solid #222831;
}

.panel:last-child {
  border-right: none;
}

.panel-body {
  display: grid;
  height: 152px;
  padding-top: 8px;
}

.draw .panel-body { grid-template-columns: 84px 86px 112px 70px 1fr; }
.modify .panel-body { grid-template-columns: 131px 58px 82px 1fr; }
.annotation .panel-body { grid-template-columns: 98px 116px 1fr; }
.layers .panel-body { grid-template-columns: 126px 1fr; }
.block .panel-body { grid-template-columns: 86px 1fr; }
.properties .panel-body { grid-template-columns: 129px 1fr; }
.groups .panel-body { grid-template-columns: 84px 1fr; }
.utilities .panel-body { grid-template-columns: 145px 1fr; }
.clipboard .panel-body { grid-template-columns: 108px 1fr; }

.big {
  flex-direction: column;
  padding-top: 6px;
}

.big svg {
  width: 64px;
  height: 64px;
  margin-bottom: 8px;
}

.big .caret {
  margin-top: 4px;
}

.tools {
  padding-left: 14px;
}

.tools button {
  gap: 14px;
  height: 48px;
}

.modify .tools button {
  gap: 12px;
}

.modify .tools:first-child button {
  gap: 10px;
}

.block .tools,
.utilities .tools,
.clipboard .tools {
  padding-left: 5px;
}

.groups .tools {
  padding-left: 0;
}

.groups .tools button {
  justify-content: center;
  width: 48px;
}

.groups .tools .pressed {
  height: 44px;
  background-color: #4a5f78;
  border: 2px solid #6fc2ff;
}

.combo {
  flex: 1;
  display: flex;
  align-items: center;
  gap: 6px;
  height: 44px;
  padding: 0 2px 0 6px;
  background-color: #4e5a6e;
  border: 2px solid #2a313c;
}

.combo select {
  flex: 1;
  min-width: 0;
  padding-left: 2px;
  appearance: none;
}

.layer-tools {
  padding: 2px 5px 0 0;
}

.layer-tools .row {
  display: flex;
  gap: 16px;
  height: 48px;
  padding-left: 8px;
}

.prop {
  display: flex;
  align-items: center;
  gap: 4px;
  height: 48px;
  padding-right: 3px;
}

.prop .combo {
  padding-left: 12px;
}

.swatch {
  width: 32px;
  height: 32px;
  background-color: #ff8000;
  border: 2px solid #d9d9d9;
}

.sample {
  width: 128px;
  height: 2px;
  margin-right: -4px;
  background-color: #f5f5f5;
}

.panel-title {
  display: flex;
  padding-top: 9px;
}

.panel-title button {
  flex: 1;
  justify-content: center;
  gap: 12px;
}

.panel-title .launcher {
  flex: none;
  width: 26px;
}

.launcher svg {
  width: 12px;
  height: 12px;
}

/* Drawing and layout tabs */
.file-tabs,
.layout-tabs {
  display: flex;
  align-items: center;
}

.file-tabs {
  height: 62px;
  padding-top: 6px;
  border-bottom: 8px solid #3b4453;
}

.file-tabs a,
.layout-tabs a {
  display: flex;
  align-items: center;
  height: 48px;
  padding-left: 17px;
}

.file-tabs .current,
.layout-tabs .current {
  gap: 16px;
  margin-left: 11px;
  padding: 0 23px 0 34px;
  font-weight: bold;
  background-color: #3b4453;
  clip-path: polygon(20px 0, 100% 0, calc(100% - 20px) 100%, 0 100%);
}

.layout-tabs .current {
  margin-left: 14px;
  padding: 0 36px 0 34px;
}

.current svg {
  width: 18px;
  height: 18px;
  stroke: #a3a8b0;
  stroke-width: 3;
}

.slash {
  width: 14px;
  height: 32px;
  margin-left: 15px;
  background-color: #566176;
  clip-path: polygon(12px 0, 14px 0, 2px 100%, 0 100%);
}

.plus {
  margin: 0 6px 0 18px;
}

.plus svg {
  width: 24px;
  height: 24px;
  stroke-width: 4;
}

/* Drawing area */
.canvas {
  flex: 1;
  position: relative;
  background-color: #8a8a8a;
}

.drawing {
  position: absolute;
  top: 230px;
  left: 480px;
  width: 1250px;
  height: 820px;
  shape-rendering: crispEdges;
}

.sheet {
  fill: #fff;
  stroke: #2b2b2a;
  stroke-width: 1;
  filter: drop-shadow(0 0 5px rgba(0, 0, 0, 0.3));
}

.viewport {
  stroke: #2b2b2a;
  stroke-width: 6;
}

.thin {
  stroke-width: 1;
}

.ucs {
  position: absolute;
  left: 21px;
  bottom: 24px;
  width: 102px;
  height: 175px;
  stroke: #0040ff;
  stroke-width: 1;
  shape-rendering: crispEdges;
}

.mdi-buttons {
  position: absolute;
  top: 13px;
  right: 15px;
  display: flex;
  gap: 16px;
}

.mdi-buttons svg {
  fill: #ececec;
  stroke: #43434b;
}

.navbar {
  position: absolute;
  top: 47px;
  right: 3px;
  display: flex;
  flex-direction: column;
  align-items: center;
  gap: 8px;
  width: 62px;
  height: 252px;
  background-color: #a1a1a1;
  border: 2px solid #6e6e6e;
  border-radius: 6px;
}

.navbar svg {
  width: 48px;
  height: 48px;
  fill: #a6a9a9;
  stroke: #8b8d8d;
}

.navbar .nf {
  fill: #8b8d8d;
}

.navbar .handle {
  stroke-width: 5;
}

.navbar text {
  font-size: 18px;
  font-weight: bold;
  fill: #7f8a9c;
  stroke: none;
}

.navbar .wheel {
  padding-bottom: 9px;
  border-bottom: 1px solid #959595;
}

.navbar .nav-dot {
  align-self: stretch;
  justify-content: flex-end;
  padding: 2px 4px 2px 0;
  border-bottom: 1px solid #959595;
}

.navbar .last {
  margin-top: 6px;
  border: none;
}

.navbar .nav-dot svg {
  width: 16px;
  height: 16px;
  stroke: #b4b4b4;
}

.navbar .nav-dot circle {
  fill: #8b8d8d;
  stroke: none;
}

.navbar .caret {
  background-color: #8b8d8d;
}

/* Command window */
.command {
  position: absolute;
  left: 583px;
  right: 583px;
  bottom: 9px;
  display: flex;
  background-color: #484c57;
  border: 2px solid #484c57;
  border-radius: 5px;
}

.grip {
  display: flex;
  flex-direction: column;
  align-items: center;
  gap: 16px;
  width: 48px;
  padding: 9px 2px 0 0;
}

.grip svg {
  width: 20px;
  height: 20px;
  stroke: #c4c4c4;
  stroke-width: 4;
}

.grip .dots-grip {
  width: 36px;
  height: 9px;
  stroke-width: 3;
  stroke-dasharray: 3 3;
}

.grip .wrench {
  width: 32px;
  height: 32px;
  margin-top: 6px;
  stroke-width: 6;
  stroke-linecap: round;
}

.console {
  flex: 1;
  font-family: "DejaVu Sans Mono", "Liberation Mono", monospace;
  line-height: 31px;
  color: #2b2b2b;
}

.console pre {
  font: inherit;
  padding: 9px 4px 3px;
  background-color: #b4b4b4;
}

.prompt {
  display: flex;
  align-items: center;
  height: 42px;
  padding: 0 8px;
  background-color: #dcdcdc;
  border-top: 2px solid #484c57;
}

.prompt .caret {
  background-color: #707070;
}

.prompt input {
  flex: 1;
  padding-left: 13px;
}

.prompt input::placeholder {
  font-style: italic;
  color: #808080;
}

.term {
  width: 32px;
  height: 24px;
  margin-right: 4px;
  stroke: #707070;
}

.term .head {
  fill: #707070;
}

/* Status bar */
.statusbar {
  display: flex;
  justify-content: space-between;
  height: 62px;
  border-top: 8px solid #3b4453;
}

.layout-tabs {
  height: 48px;
}

.status {
  display: flex;
  gap: 6px;
  height: 48px;
  margin-top: 4px;
}

.cell {
  display: flex;
  align-items: center;
  justify-content: center;
  min-width: 48px;
  background-color: #3b4453;
}

.join {
  margin-left: -4px;
}

.paper {
  padding: 0 8px;
}

.snap {
  justify-content: space-between;
  width: 208px;
  padding: 0 8px;
}

.osnap {
  justify-content: flex-start;
  gap: 4px;
  width: 128px;
  padding-left: 2px;
}

.osnap .on {
  justify-content: center;
  width: 44px;
  height: 44px;
  background-color: #6190c2;
}

.osnap .caret {
  margin-left: 6px;
}

.trio {
  gap: 16px;
  width: 144px;
}

.workspace {
  justify-content: space-between;
  width: 334px;
  padding: 0 8px;
}

.duo {
  gap: 16px;
  padding: 0 8px;
}

.trusted {
  width: 114px;
  padding: 0 10px 0 6px;
}

.gear {
  stroke-width: 6;
}

.cog {
  stroke-width: 6;
}

/* Desktop taskbar */
.taskbar {
  display: flex;
  justify-content: flex-end;
  height: 24px;
  padding: 13px 36px 0 0;
  font-size: 23px;
  line-height: 28px;
  color: #fff;
  background-color: #202020;
  border-top: 2px solid #444;
  overflow: hidden;
}
```
